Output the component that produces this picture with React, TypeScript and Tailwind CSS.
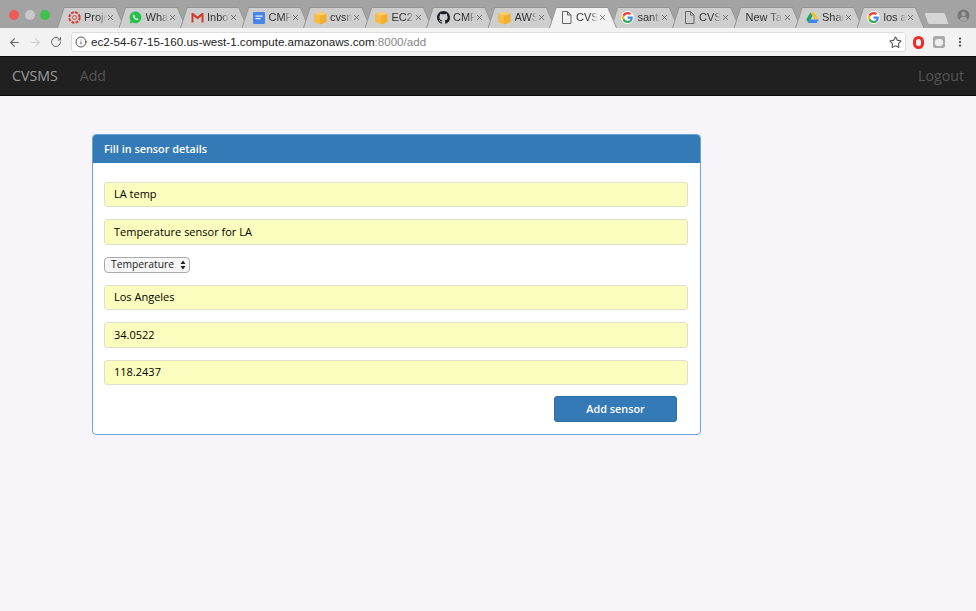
import React from "react";
import { ArrowLeft, ArrowRight, RotateCw, Info, Star, X, EllipsisVertical } from "lucide-react";

const Doc = () => (
  <svg width="13" height="15" viewBox="0 0 13 15" fill="none" stroke="#666" strokeWidth="1">
    <path d="M2.5 1.5h5l3.5 3.5v8.500h-8.500z" />
    <path d="M7.500 1.500v3.500h3.500" />
  </svg>
);
const Box = () => (
  <svg width="13" height="14" viewBox="0 0 13 14">
    <path d="M6.500 0.500 12.500 3v8l-6 2.500-6-2.500V3z" fill="#f3b02e" />
    <path d="M6 3.800V13L0.500 11V3z" fill="#f7bd45" />
    <path d="M6.500 0.500 12.500 3 6.500 4.500 0.500 3z" fill="#f9cf75" />
  </svg>
);
const Google = () => (
  <svg width="13" height="13" viewBox="-4 -4 56 56">
    <circle cx="24" cy="24" r="28" fill="#fff" />
    <path fill="#EA4335" d="M24 9.500c3.500 0 6.700 1.300 9.100 3.500l6.800-6.800C35.800 2.400 30.200 0 24 0 14.600 0 6.500 5.400 2.600 13.200l7.900 6.200C12.400 13.700 17.700 9.500 24 9.500z" />
    <path fill="#4285F4" d="M47 24.500c0-1.600-.2-3.100-.4-4.500H24v9h12.900c-.6 3-2.300 5.500-4.800 7.200l7.700 6C44.300 38 47 31.800 47 24.500z" />
    <path fill="#FBBC05" d="M10.500 28.600A14.500 14.500 0 0 1 10.500 19.400l-7.900-6.200A24 24 0 0 0 2.600 34.800z" />
    <path fill="#34A853" d="M24 48c6.500 0 11.900-2.100 15.900-5.800l-7.700-6c-2.100 1.400-4.900 2.300-8.200 2.300-6.300 0-11.600-4.200-13.500-9.900l-7.900 6.200C6.500 42.600 14.600 48 24 48z" />
  </svg>
);
const Project = () => (
  <svg width="13" height="13" viewBox="0 0 13 13" fill="none" stroke="#d8342c" strokeWidth="2">
    <circle cx="6.500" cy="6.500" r="5.200" strokeDasharray="2.800 1.280" />
    <circle cx="6.500" cy="6.500" r="2" strokeWidth="0.800" />
  </svg>
);
const Whats = () => (
  <svg width="13" height="13" viewBox="0 0 12 12">
    <path d="M6 .5a5.400 5.400 0 0 0-4.600 8.200L.6 11.500l2.900-.8A5.400 5.400 0 1 0 6 .5z" fill="#25c04a" />
    <path d="M4.200 3.300c-.9.700-.8 1.900.2 3.200 1.100 1.400 2.500 2.100 3.400 1.800.5-.2.800-.7.700-1l-1.100-.6-.6.500c-.6-.2-1.400-1-1.700-1.700l.4-.6-.6-1.300z" fill="#fff" />
  </svg>
);
const Gmail = () => (
  <svg width="13" height="11" viewBox="0 0 13 11">
    <path d="M.5 1h1.600l4.400 3.400L10.900 1h1.600v9.500h-2V4.300L6.500 7.300 2.500 4.300v6.200h-2z" fill="#d23c30" />
  </svg>
);
const Docs = () => (
  <svg width="12" height="12" viewBox="0 0 12 12">
    <rect width="12" height="12" rx="1" fill="#4a86ea" />
    <rect x="2.500" y="3.500" width="7" height="1.200" fill="#e8f0fd" />
    <rect x="2.500" y="6" width="5" height="1.200" fill="#e8f0fd" />
  </svg>
);
const Github = () => (
  <svg width="13" height="13" viewBox="0 0 16 16">
    <path fill="#1b1f23" d="M8 0C3.580 0 0 3.580 0 8c0 3.540 2.290 6.530 5.470 7.590.4.070.55-.170.550-.380 0-.190-.010-.820-.010-1.490-2.010.370-2.530-.490-2.690-.940-.090-.230-.480-.940-.820-1.130-.280-.150-.680-.520-.010-.530.630-.010 1.080.580 1.230.820.720 1.210 1.870.870 2.330.660.070-.520.280-.870.510-1.070-1.780-.200-3.640-.890-3.640-3.950 0-.870.310-1.590.820-2.150-.080-.200-.360-1.020.080-2.120 0 0 .670-.210 2.200.820a7.500 7.500 0 0 1 4 0c1.530-1.040 2.200-.820 2.200-.820.440 1.100.160 1.920.080 2.120.510.560.820 1.270.820 2.150 0 3.070-1.870 3.750-3.650 3.950.290.250.540.730.540 1.480 0 1.070-.010 1.930-.010 2.200 0 .210.150.460.550.380A8.010 8.010 0 0 0 16 8c0-4.420-3.580-8-8-8z" />
  </svg>
);
const Drive = () => (
  <svg width="13" height="12" viewBox="0 0 13 12">
    <path d="M4.500 .5h4l4.200 7h-4z" fill="#f5c430" />
    <path d="M4.500 .5 .3 7.500l2 3.500 4.200-7z" fill="#1fa463" />
    <path d="M2.300 11h8.400l2-3.500H4.300z" fill="#4285f4" />
  </svg>
);

const tabs: { icon: React.ReactNode; label: string; active?: boolean }[] = [
  { icon: <Project />, label: "Proje" },
  { icon: <Whats />, label: "What" },
  { icon: <Gmail />, label: "Inbox" },
  { icon: <Docs />, label: "CMP" },
  { icon: <Box />, label: "cvsm" },
  { icon: <Box />, label: "EC2" },
  { icon: <Github />, label: "CMP" },
  { icon: <Box />, label: "AWS" },
  { icon: <Doc />, label: "CVSI", active: true },
  { icon: <Google />, label: "santa" },
  { icon: <Doc />, label: "CVSI" },
  { icon: null, label: "New Tab" },
  { icon: <Drive />, label: "Shar" },
  { icon: <Google />, label: "los a" },
];

function Tab({ icon, label, active }: { icon: React.ReactNode; label: string; active?: boolean }) {
  return (
    <div
      className={`relative w-[68px] h-[21px] -mr-[6.500px] shrink-0 flex items-center pl-[10px] pr-[10px] gap-[3px] bg-[#949494] [clip-path:polygon(0_100%,7px_0,59px_0,68px_100%)] ${
        active ? "z-10" : ""
      }`}
    >
      <span
        className={`absolute inset-0 [clip-path:polygon(1px_100%,7.500px_1px,58.500px_1px,67px_100%)] ${
          active ? "bg-[#f2f2f2]" : "bg-[#cecece]"
        }`}
      />
      {icon && <span className="relative w-[14px] shrink-0 flex justify-center">{icon}</span>}
      <span
        className={`relative text-[11px] leading-none text-[#333] overflow-hidden whitespace-nowrap [mask-image:linear-gradient(to_right,black_65%,transparent)] ${
          icon ? "w-[22px]" : "w-[37px] ml-[2px]"
        }`}
      >
        {label}
      </span>
      <X className="absolute right-[10px] top-[6px] text-[#555]" size={9} strokeWidth={2} />
    </div>
  );
}

function Field({ value }: { value: string }) {
  return (
    <div className="h-[25.500px] rounded-[3px] border border-[#dfdfd0] bg-[#fafdbd] px-[9px] flex items-center text-[11px] text-black">
      {value}
    </div>
  );
}

export default function App() {
  return (
    <div className="w-[976px] h-[611px] overflow-hidden bg-[#f7f5f9] [font-family:'Open_Sans',sans-serif]">
      <div className="h-[28px] bg-[#a3a3a3] flex items-end relative [font-family:'Liberation_Sans',sans-serif]">
        <div className="flex items-center gap-[5.500px] pl-[9px] w-[57px] h-full shrink-0 pt-[2px]">
          <span className="w-[10px] h-[10px] rounded-full bg-[#ee5a55]" />
          <span className="w-[10px] h-[10px] rounded-full bg-[#c9c9c9]" />
          <span className="w-[10px] h-[10px] rounded-full bg-[#3fc24b]" />
        </div>
        {tabs.map((t, i) => (
          <Tab key={i} {...t} />
        ))}
        <div className="ml-[6.500px] mb-[4px] w-[24px] h-[11px] bg-[#d6d6d6] [clip-path:polygon(0_0,20px_0,100%_100%,4px_100%)]" />
        <svg className="absolute right-[6px] top-[9px]" width="13" height="13" viewBox="0 0 13 13">
          <circle cx="6.500" cy="6.500" r="6" fill="#777" />
          <circle cx="6.500" cy="5" r="2.200" fill="#a3a3a3" />
          <path d="M2.500 10.500c.6-2 2.200-2.700 4-2.700s3.400.7 4 2.700a6 6 0 0 1-8 0z" fill="#a3a3a3" />
        </svg>
      </div>

      <div className="h-[28px] bg-[#f2f2f2] flex items-center [font-family:'Liberation_Sans',sans-serif]">
        <div className="w-[71px] shrink-0 flex items-center pl-[8px] gap-[8px]">
          <ArrowLeft size={13} className="text-[#666]" strokeWidth={2} />
          <ArrowRight size={13} className="text-[#ccc]" strokeWidth={2} />
          <RotateCw size={12} className="text-[#666]" strokeWidth={2} />
        </div>
        <div className="w-[835px] h-[20px] bg-white rounded-[3px] border border-[#dedede] flex items-center pl-[3px] pr-[3px] text-[11.600px]">
          <Info size={12} className="text-[#555] mr-[4px] shrink-0" />
          <span className="text-[#222]">ec2-54-67-15-160.us-west-1.compute.amazonaws.com</span>
          <span className="text-[#888]">:8000/add</span>
          <Star size={13} className="ml-auto text-[#555]" />
        </div>
        <div className="flex-1 flex items-center pl-[7px] gap-[9px]">
          <span className="w-[11px] h-[13px] rounded-full border-[3px] border-[#ee2b2b]" />
          <span className="w-[12px] h-[12px] rounded-[2px] bg-[#aaa] flex items-center justify-center">
            <span className="w-[8px] h-[7px] rounded-[3px] bg-[#eee]" />
          </span>
          <EllipsisVertical size={12} className="text-[#444]" strokeWidth={2.500} />
        </div>
      </div>

      <nav className="h-[40px] bg-[#202020] border-t-[1px] border-t-[#0c0c0c] border-b-[1px] border-b-[#080808] flex items-center px-[12px] text-[14.200px]">
        <span className="text-[#9d9d9d]">CVSMS</span>
        <span className="text-[#555] ml-[22px]">Add</span>
        <span className="text-[#555] ml-auto">Logout</span>
      </nav>

      <div className="pt-[38px] pl-[92px]">
        <div className="w-[609px] h-[301px] rounded-[4px] border border-[#6ca3d2] bg-white overflow-hidden flex flex-col">
          <div className="h-[28px] shrink-0 bg-[#337ab7] text-white text-[10.850px] font-semibold px-[11px] flex items-center">
            Fill in sensor details
          </div>
          <div className="pl-[11px] pr-[12px] pt-[18.500px] flex flex-col">
            <Field value="LA temp" />
            <div className="mt-[12px]"><Field value="Temperature sensor for LA" /></div>
            <div className="mt-[12px] mb-[12px] w-[86px] h-[16px] rounded-[4px] border border-[#aaa] bg-[#f6f6f6] pl-[6px] flex items-center justify-between pr-[3px] text-[10.300px] text-[#222]">
              <span>Temperature</span>
              <svg width="6" height="10" viewBox="0 0 6 10" fill="#222">
                <path d="M3 0.500 5.500 4h-5zM3 9.500 .5 6h5z" />
              </svg>
            </div>
            <Field value="Los Angeles" />
            <div className="mt-[12px]"><Field value="34.0522" /></div>
            <div className="mt-[12px]"><Field value="118.2437" /></div>
            <div className="mt-[11px] flex justify-end pr-[11px]">
              <button className="w-[123px] h-[26px] rounded-[3px] border border-[#2e6da4] bg-[#337ab7] text-white text-[10.850px] font-semibold">
                Add sensor
              </button>
            </div>
          </div>
        </div>
      </div>
    </div>
  );
}
